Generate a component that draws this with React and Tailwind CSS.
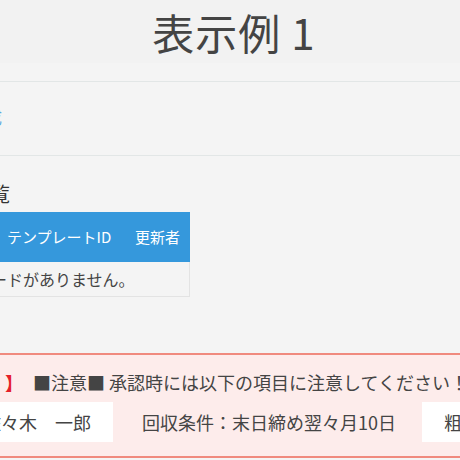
export default function App() {
  return (
    <div className="h-screen w-full overflow-hidden bg-[#f4f4f4] text-[#444] font-['Noto_Sans_CJK_JP','Noto_Sans',sans-serif]">
      {/* page title */}
      <div className="flex h-[63px] items-center justify-center bg-[#f2f2f2] pl-2">
        <h1 className="text-[42px] leading-none tracking-[1px] text-[#444]">
          表示例<span className="ml-[10px]">1</span>
        </h1>
      </div>

      <div className="h-[18px]" />

      {/* link area */}
      <div className="flex h-[75px] items-center border-t border-b border-[#e2e6e6] pb-1">
        <div className="-ml-[98px] w-[100px] whitespace-nowrap text-right text-[17px] text-[#5aa9e0]">
          新規作成
        </div>
      </div>

      {/* list heading */}
      <div className="pt-[26px]">
        <div className="-ml-[160px] w-[170px] whitespace-nowrap text-right text-[20px] leading-[24px] text-[#333]">
          テンプレート一覧
        </div>
      </div>

      {/* table */}
      <div className="mt-[6px] -ml-[150px] w-[340px] text-[15px]">
        <div className="flex h-[50px] items-center bg-[#3598dc] text-white">
          <div className="w-[150px] pl-4 whitespace-nowrap">テンプレート名</div>
          <div className="w-[125px] pl-[7px] whitespace-nowrap">テンプレートID</div>
          <div className="w-[65px] pl-[10px] whitespace-nowrap">更新者</div>
        </div>
        <div className="flex h-[35px] items-center border border-t-0 border-[#e3e3e3] pl-[108px] text-[16px] text-[#444] whitespace-nowrap">
          レコードがありません。
        </div>
      </div>

      {/* notice box */}
      <div className="mt-[56px] border-y-2 border-[#f08a7e] bg-[#fdeceb] pt-[14px] pb-[14px] text-[18px] text-[#444]">
        <div className="flex h-[26px] items-center whitespace-nowrap leading-[26px]">
          <span className="-ml-[56px] font-bold text-[#e5202a]">
            【承認<span className="ml-[7px]">】</span>
          </span>
          <span className="ml-[10px]">■注意■ 承認時には以下の項目に注意してください！</span>
        </div>
        <div className="mt-[7px] flex h-[40px] items-stretch whitespace-nowrap">
          <div className="-ml-[41px] flex items-center bg-white pl-[24px] pr-[22px]">佐々木　一郎</div>
          <div className="ml-[6px] flex items-center px-[23px]">回収条件：末日締め翌々月10日</div>
          <div className="ml-[3px] flex items-center bg-white pl-[22px] pr-[22px]">粗利率：30％</div>
        </div>
      </div>
    </div>
  );
}
